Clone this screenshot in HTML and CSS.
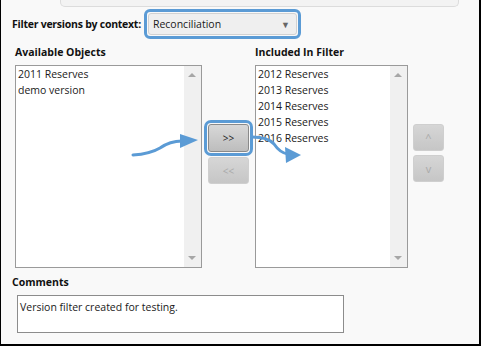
FILE: index.html
```html
<!DOCTYPE html>
<html lang="en">

<head>
    <meta charset="UTF-8">
    <title>Version filter</title>
    <link rel="stylesheet" href="styles.css">
</head>

<body>
    <div class="frame">
        <div class="stub"></div>
        <div class="context-row">
            <label class="bold tight">Filter versions by context:</label>
            <div class="highlight">
                <div class="select">
                    <span>Reconciliation</span>
                    <span class="caret">&#9660;</span>
                </div>
            </div>
        </div>

        <div class="lists">
            <div class="bold heading">Available Objects</div>
            <div></div>
            <div class="bold heading">Included In Filter</div>
            <div></div>

            <div class="listbox">
                <div class="items">
                    <div>2011 Reserves</div>
                    <div>demo version</div>
                </div>
                <div class="scroll">
                    <span class="up"></span>
                    <span class="down"></span>
                </div>
            </div>
            <div class="buttons">
                <button class="btn active">&gt;&gt;</button>
                <button class="btn">&lt;&lt;</button>
            </div>
            <div class="listbox">
                <div class="items">
                    <div>2012 Reserves</div>
                    <div>2013 Reserves</div>
                    <div>2014 Reserves</div>
                    <div>2015 Reserves</div>
                    <div>2016 Reserves</div>
                </div>
                <div class="scroll">
                    <span class="up"></span>
                    <span class="down"></span>
                </div>
            </div>
            <div class="buttons order">
                <button class="btn">^</button>
                <button class="btn">v</button>
            </div>
        </div>

        <div class="bold comments-label">Comments</div>
        <div class="comments">Version filter created for testing.</div>

        <svg class="arrows" width="481" height="346" viewBox="0 0 481 346">
            <path d="M133 155 Q150 154 160 148 Q170 141 182 141" />
            <polygon points="180,134 198,140 180,148" />
            <path d="M252 137 Q268 137 274 144 Q280 153 288 154" />
            <polygon points="285,147 301,155 286,163" />
        </svg>
    </div>
</body>

</html>
```

FILE: styles.css
```css
* {
    margin: 0;
    padding: 0;
    box-sizing: border-box;
}

body {
    font-family: "Segoe UI", "Open Sans", sans-serif;
    font-size: 10.5px;
    color: #1a1a1a;
}

.frame {
    position: relative;
    width: 481px;
    height: 346px;
    background-color: #f9f9f9;
    border-left: 1px solid #000;
    border-right: 2px solid #000;
    border-bottom: 2px solid #000;
    overflow: hidden;
}

.bold {
    font-weight: 700;
    color: #111;
}

.tight {
    letter-spacing: -0.25px;
}

.stub {
    height: 7px;
    margin: 0 20px 0 59px;
    background-color: #f3f3f3;
    border: 1px solid #dcdcdc;
    border-top: none;
    border-radius: 0 0 5px 5px;
}

.context-row {
    display: flex;
    align-items: center;
    gap: 3px;
    margin-top: 2px;
    padding-left: 11px;
}

.highlight {
    width: 157px;
    height: 30px;
    padding: 1px;
    border: 3px solid #5b9bd5;
    border-radius: 6px;
}

.select {
    display: flex;
    justify-content: space-between;
    align-items: center;
    height: 100%;
    padding: 0 6px 0 4px;
    background-color: #efefef;
    border: 1px solid #d2d2d2;
    border-radius: 3px;
}

.caret {
    font-size: 9px;
    color: #666;
}

.lists {
    display: grid;
    grid-template-columns: 187px 41px 153px 30px;
    column-gap: 6px;
    row-gap: 6px;
    margin-top: 6px;
    padding-left: 14px;
}

.lists .order {
    margin-left: -1px;
}

.heading {
    line-height: 14px;
}

.listbox {
    display: flex;
    height: 203px;
    background-color: #fff;
    border: 1px solid #9a9a9a;
}

.items {
    flex: 1;
    padding: 0 2px;
    line-height: 16px;
}

.scroll {
    position: relative;
    width: 17px;
    background-color: #f0f0f0;
}

.up,
.down {
    position: absolute;
    left: 4px;
    border-left: 4px solid transparent;
    border-right: 4px solid transparent;
}

.up {
    top: 7px;
    border-bottom: 4px solid #a6a6a6;
}

.down {
    bottom: 7px;
    border-top: 4px solid #a6a6a6;
}

.buttons {
    display: flex;
    flex-direction: column;
    gap: 5px;
    padding-top: 59px;
}

.order {
    gap: 4px;
}

.btn {
    height: 27px;
    font-family: inherit;
    font-size: 10px;
    color: #a9a9a9;
    background: linear-gradient(#d6d6d6, #c6c6c6);
    border: 1px solid #cfcfcf;
    border-radius: 3px;
}

.order .btn {
    font-size: 11px;
}

.btn.active {
    height: 28px;
    color: #222;
    background: linear-gradient(#d8d8d8, #bdbdbd);
    border-color: #8a8a8a;
    outline: 3px solid #5b9bd5;
    outline-offset: 1px;
}

.comments-label {
    margin: 7px 0 0 11px;
    line-height: 14px;
}

.comments {
    width: 327px;
    height: 38px;
    margin: 6px 0 0 16px;
    padding: 3px 2px;
    line-height: 16px;
    background-color: #fff;
    border: 1px solid #8c8c8c;
}

.arrows {
    position: absolute;
    left: -1px;
    top: 0;
    pointer-events: none;
}

.arrows path {
    fill: none;
    stroke: #5b9bd5;
    stroke-width: 3;
    stroke-linecap: round;
}

.arrows polygon {
    fill: #5b9bd5;
}
```
